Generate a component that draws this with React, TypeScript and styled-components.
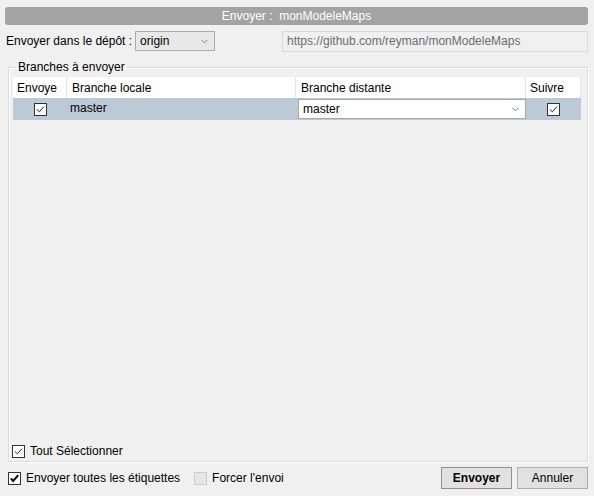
import * as React from "react";
import styled, { createGlobalStyle } from "styled-components";

const GlobalStyle = createGlobalStyle`
  html, body {
    margin: 0;
    padding: 0;
    background: #f0f0f0;
  }
  body {
    font-family: "Liberation Sans", Arial, sans-serif;
    font-size: 12px;
    color: #000;
  }
`;

const Dialog = styled.div`
  width: 594px;
  height: 496px;
  box-sizing: border-box;
  padding: 7px 6px 7px 5px;
  display: flex;
  flex-direction: column;
  background: #f0f0f0;
`;

const TitleBar = styled.div`
  height: 18px;
  border-radius: 3px;
  background: #a3a3a3;
  color: #fff;
  display: flex;
  align-items: center;
  justify-content: center;
  white-space: pre;
`;

const RemoteRow = styled.div`
  display: flex;
  align-items: center;
  margin-top: 6px;
  padding-left: 1px;
  height: 20px;
`;

const Label = styled.span`
  white-space: pre;
  margin-right: 3px;
`;

const Combo = styled.div<{ width: number; white?: boolean }>`
  width: ${(p) => p.width}px;
  height: 20px;
  box-sizing: border-box;
  border: 1px solid ${(p) => (p.white ? "#a8a8a8" : "#adadad")};
  background: ${(p) => (p.white ? "#fff" : "#e8e8e8")};
  display: flex;
  align-items: center;
  padding-left: 4px;
  padding-right: 6px;
  justify-content: space-between;
`;

const Chevron = () => (
  <svg width="7" height="5" viewBox="0 0 7 5">
    <path d="M0.5 0.8 L3.5 3.8 L6.5 0.8" fill="none" stroke="#7a7a7a" strokeWidth="1" />
  </svg>
);

const UrlField = styled.div`
  margin-left: auto;
  width: 306px;
  height: 21px;
  box-sizing: border-box;
  border: 1px solid #d9d9d9;
  background: #f0f0f0;
  color: #6d6d6d;
  display: flex;
  align-items: center;
  padding-left: 4px;
`;

const GroupBox = styled.fieldset`
  margin: 9px 0 0 3px;
  padding: 3px 4px 3px 4px;
  flex: 1;
  min-height: 0;
  border: 1px solid #dcdcdc;
  box-shadow: inset 1px 1px 0 #fff, 1px 1px 0 #fff;
  display: flex;
  flex-direction: column;
`;

const Legend = styled.legend`
  padding: 0 2px;
  margin-left: 3px;
`;

const Table = styled.div`
  display: grid;
  grid-template-columns: 54px 229px 230px 55px;
  width: 568px;
`;

const HeaderCell = styled.div<{ pad?: number }>`
  background: #fff;
  height: 21px;
  box-sizing: border-box;
  border-right: 1px solid #e5e5e5;
  display: flex;
  align-items: center;
  padding-left: ${(p) => p.pad ?? 5}px;
  overflow: hidden;
  white-space: nowrap;
  &:last-child {
    border-right: none;
  }
`;

const Clipped = styled.span<{ width: number }>`
  display: inline-block;
  width: ${(p) => p.width}px;
  overflow: hidden;
  white-space: nowrap;
`;

const RowCell = styled.div<{ center?: boolean }>`
  background: #bccad6;
  height: 22px;
  display: flex;
  align-items: ${(p) => (p.center ? "center" : "flex-start")};
  justify-content: ${(p) => (p.center ? "center" : "flex-start")};
  padding: ${(p) => (p.center ? "0" : "3px 0 0 3px")};
  box-sizing: border-box;
`;

const ComboCell = styled.div`
  background: #bccad6;
  height: 22px;
  padding: 1px 0 0 2px;
  box-sizing: border-box;
`;

const Box = styled.span<{ disabled?: boolean }>`
  width: 13px;
  height: 13px;
  box-sizing: border-box;
  border: 1px solid ${(p) => (p.disabled ? "#cccccc" : "#333")};
  background: ${(p) => (p.disabled ? "#e6e6e6" : "#fff")};
  display: inline-flex;
  align-items: center;
  justify-content: center;
  flex: 0 0 auto;
`;

const Check = ({ bold }: { bold?: boolean }) => (
  <svg width="11" height="11" viewBox="0 0 11 11">
    <path
      d={bold ? "M1.8 5.4 L4.2 7.9 L9.2 2.2" : "M2 5.5 L4.4 7.8 L9 2.6"}
      fill="none"
      stroke={bold ? "#000" : "#222"}
      strokeWidth={bold ? 2 : 1}
    />
  </svg>
);

const Spacer = styled.div`
  flex: 1;
`;

const CheckRow = styled.label<{ gap?: number }>`
  display: flex;
  align-items: center;
  gap: 5px;
  margin-left: ${(p) => p.gap || 0}px;
`;

const SelectAll = styled(CheckRow)`
  margin-left: -1px;
  margin-bottom: 0px;
`;

const Footer = styled.div`
  display: flex;
  align-items: center;
  margin-top: 5px;
  padding-left: 3px;
  height: 22px;
`;

const Button = styled.button<{ primary?: boolean }>`
  width: 71px;
  height: 22px;
  margin-left: 5px;
  border: 1px solid ${(p) => (p.primary ? "#8f8f8f" : "#adadad")};
  background: #e1e1e1;
  font-family: "Liberation Sans", Arial, sans-serif;
  font-size: 12px;
  font-weight: ${(p) => (p.primary ? 700 : 400)};
  color: #000;
  padding: 0;
  outline: none;
`;

const Buttons = styled.div`
  margin-left: auto;
  display: flex;
`;

export default function App() {
  return (
    <>
      <GlobalStyle />
      <Dialog>
        <TitleBar>Envoyer :  monModeleMaps</TitleBar>
        <RemoteRow>
          <Label>Envoyer dans le dépôt :</Label>
          <Combo width={80}>
            <span>origin</span>
            <Chevron />
          </Combo>
          <UrlField>https://github.com/reyman/monModeleMaps</UrlField>
        </RemoteRow>
        <GroupBox>
          <Legend>Branches à envoyer</Legend>
          <Table>
            <HeaderCell pad={4}>
              <Clipped width={40}>Envoyer</Clipped>
            </HeaderCell>
            <HeaderCell>Branche locale</HeaderCell>
            <HeaderCell>Branche distante</HeaderCell>
            <HeaderCell pad={4}>Suivre</HeaderCell>
            <RowCell center>
              <Box>
                <Check />
              </Box>
            </RowCell>
            <RowCell>master</RowCell>
            <ComboCell>
              <Combo width={228} white>
                <span>master</span>
                <Chevron />
              </Combo>
            </ComboCell>
            <RowCell center>
              <Box>
                <Check />
              </Box>
            </RowCell>
          </Table>
          <Spacer />
          <SelectAll>
            <Box>
              <Check />
            </Box>
            <span>Tout Sélectionner</span>
          </SelectAll>
        </GroupBox>
        <Footer>
          <CheckRow>
            <Box>
              <Check bold />
            </Box>
            <span>Envoyer toutes les étiquettes</span>
          </CheckRow>
          <CheckRow gap={14}>
            <Box disabled />
            <span>Forcer l'envoi</span>
          </CheckRow>
          <Buttons>
            <Button primary>Envoyer</Button>
            <Button>Annuler</Button>
          </Buttons>
        </Footer>
      </Dialog>
    </>
  );
}
